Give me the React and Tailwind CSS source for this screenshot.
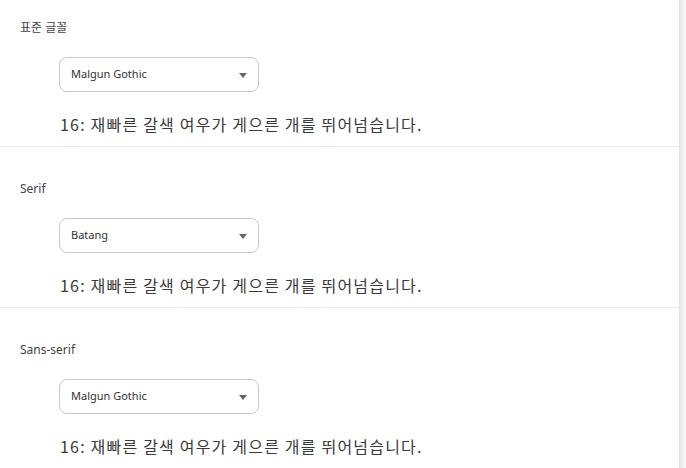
import React from "react";

const sections = [
  { label: "표준 글꼴", value: "Malgun Gothic", first: true },
  { label: "Serif", value: "Batang" },
  { label: "Sans-serif", value: "Malgun Gothic" },
];

const sample = "16: 재빠른 갈색 여우가 게으른 개를 뛰어넘습니다.";

function FontSelect({ value }) {
  return (
    <div className="ml-[59px] w-[200px] h-[35px] border border-[#c8c8c8] rounded-[8px] flex items-center justify-between pl-[11px] pr-[11px] bg-white">
      <span className="text-[11px] text-[#333]">{value}</span>
      <svg width="8" height="5" viewBox="0 0 8 5" className="mt-[1px]">
        <path d="M0 0 L8 0 L4 5 Z" fill="#666" />
      </svg>
    </div>
  );
}

export default function App() {
  return (
    <div
      className="flex w-[686px] h-[468px] bg-white overflow-hidden"
      style={{ fontFamily: '"Noto Sans", "Noto Sans CJK KR", sans-serif' }}
    >
      <div className="flex-1 flex flex-col">
        {sections.map((s, i) => (
          <div
            key={i}
            className={
              (s.first ? "pt-[18px] " : "pt-[32px] ") +
              (i < sections.length - 1 ? "border-b border-[#ebebeb] pb-[10px]" : "")
            }
          >
            <div className="pl-[20px] h-[20px] leading-[20px] text-[12px] text-[#444]">
              {s.label}
            </div>
            <div className="mt-[19px]">
              <FontSelect value={s.value} />
            </div>
            <div
              className="mt-[20px] pl-[60px] h-[24px] leading-[24px] text-[16px] tracking-[1.2px] text-[#3a3a3a]"
              style={{ fontFamily: '"Noto Sans CJK KR", sans-serif' }}
            >
              {sample}
            </div>
          </div>
        ))}
      </div>
      <div className="w-[7px] border-l border-[#e2e2e2] bg-linear-to-r from-[#e6e6e6] to-[#fafafa]" />
    </div>
  );
}
